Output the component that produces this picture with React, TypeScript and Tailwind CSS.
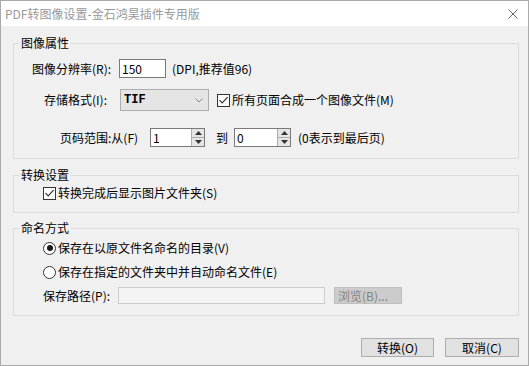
import React from 'react';

const font = { fontFamily: '"Noto Sans CJK SC", "Liberation Sans", sans-serif' };

function CheckBox() {
  return (
    <span className="inline-flex h-[13px] w-[13px] shrink-0 items-center justify-center border border-[#333333] bg-white">
      <svg width="11" height="11" viewBox="0 0 11 11">
        <path d="M1.5 5.2 L4.2 8 L9.6 2.2" fill="none" stroke="#333333" strokeWidth="1.2" />
      </svg>
    </span>
  );
}

function Radio({ checked }: { checked?: boolean }) {
  return (
    <span className="inline-flex h-[13px] w-[13px] shrink-0 items-center justify-center rounded-full border border-[#333333] bg-white">
      {checked && <span className="h-[6px] w-[6px] rounded-full bg-[#1a1a1a]" />}
    </span>
  );
}

function Spinner({ value, width }: { value: string; width: string }) {
  return (
    <div className={`flex h-[19px] items-stretch border border-[#7a7a7a] bg-white ${width}`}>
      <span className="flex-1 pl-[2px] text-[12px] leading-[17px]">{value}</span>
      <span className="flex w-[13px] flex-col border-l border-[#adadad] bg-[#e5e5e5]">
        <span className="flex flex-1 items-center justify-center border-b border-[#adadad]">
          <svg width="7" height="4" viewBox="0 0 7 4"><path d="M0 4 L3.5 0 L7 4 Z" fill="#333" /></svg>
        </span>
        <span className="flex flex-1 items-center justify-center">
          <svg width="7" height="4" viewBox="0 0 7 4"><path d="M0 0 L3.5 4 L7 0 Z" fill="#333" /></svg>
        </span>
      </span>
    </div>
  );
}

export default function App() {
  return (
    <div className="flex h-[366px] w-[529px] flex-col border border-[#aaaaaa] text-[12px] text-black" style={font}>
      {/* Title bar */}
      <div className="flex h-[25px] items-center justify-between bg-white pl-[4px] pr-[10px]">
        <span className="text-[12px] leading-[16px] text-[#999999]">PDF转图像设置-金石鸿昊插件专用版</span>
        <svg width="10" height="10" viewBox="0 0 10 10">
          <path d="M0.5 0.5 L9.5 9.5 M9.5 0.5 L0.5 9.5" stroke="#666666" strokeWidth="1" />
        </svg>
      </div>

      {/* Body */}
      <div className="flex flex-1 flex-col bg-[#f0f0f0] pl-[12px] pt-[9px]">
        {/* 图像属性 */}
        <fieldset className="flex h-[124px] w-[506px] flex-col border border-[#dcdcdc]">
          <legend className="ml-[5px] px-[2px] leading-[16px]">图像属性</legend>
          <div className="mt-[8px] flex h-[19px] items-center pl-[18px]">
            <span className="w-[87px]">图像分辨率(R):</span>
            <span className="h-[19px] w-[47px] border border-[#7a7a7a] bg-white pl-[2px] leading-[17px]">150</span>
            <span className="ml-[6px]">(DPI,推荐值96)</span>
          </div>
          <div className="mt-[11px] flex h-[22px] items-center pl-[30px]">
            <span className="w-[76px]">存储格式(I):</span>
            <span className="flex h-[22px] w-[89px] items-center justify-between border border-[#adadad] bg-[#e5e5e5] pl-[3px] pr-[5px]">
              <span className="font-bold" style={{ fontFamily: '"Liberation Mono", monospace' }}>TIF</span>
              <svg width="8" height="5" viewBox="0 0 8 5"><path d="M0.5 0.5 L4 4 L7.5 0.5" fill="none" stroke="#888" strokeWidth="1" /></svg>
            </span>
            <span className="ml-[8px] flex items-center gap-[2px]">
              <CheckBox />
              <span>所有页面合成一个图像文件(M)</span>
            </span>
          </div>
          <div className="mt-[17px] flex h-[19px] items-center pl-[46px]">
            <span className="w-[90px]">页码范围:从(F)</span>
            <Spinner value="1" width="w-[55px]" />
            <span className="ml-[11px] w-[18px]">到</span>
            <Spinner value="0" width="w-[57px]" />
            <span className="ml-[7px]">(0表示到最后页)</span>
          </div>
        </fieldset>

        {/* 转换设置 */}
        <fieldset className="mt-[8px] flex h-[46px] w-[506px] flex-col border border-[#dcdcdc]">
          <legend className="ml-[5px] px-[2px] leading-[16px]">转换设置</legend>
          <div className="mt-[2px] flex h-[16px] items-center gap-[2px] pl-[29px]">
            <CheckBox />
            <span>转换完成后显示图片文件夹(S)</span>
          </div>
        </fieldset>

        {/* 命名方式 */}
        <fieldset className="mt-[7px] flex h-[96px] w-[506px] flex-col border border-[#dcdcdc]">
          <legend className="ml-[5px] px-[2px] leading-[16px]">命名方式</legend>
          <div className="mt-[4px] flex h-[16px] items-center gap-[2px] pl-[29px]">
            <Radio checked />
            <span>保存在以原文件名命名的目录(V)</span>
          </div>
          <div className="mt-[8px] flex h-[16px] items-center gap-[2px] pl-[29px]">
            <Radio />
            <span>保存在指定的文件夹中并自动命名文件(E)</span>
          </div>
          <div className="mt-[7px] flex h-[17px] items-center pl-[29px]">
            <span className="w-[75px]">保存路径(P):</span>
            <span className="h-[17px] w-[207px] border border-[#cccccc] bg-[#f4f4f4]" />
            <span className="ml-[9px] flex h-[17px] w-[68px] items-center border border-[#bfbfbf] bg-[#cccccc] pl-[3px] text-[#838383]">
              浏览(B)...
            </span>
          </div>
        </fieldset>

        {/* Buttons */}
        <div className="mt-[22px] flex w-[506px] justify-end gap-[11px]">
          <button className="h-[19px] w-[73px] border border-[#adadad] bg-[#e1e1e1] text-[12px] leading-[17px]">转换(O)</button>
          <button className="h-[19px] w-[74px] border border-[#adadad] bg-[#e1e1e1] text-[12px] leading-[17px]">取消(C)</button>
        </div>
      </div>
    </div>
  );
}
